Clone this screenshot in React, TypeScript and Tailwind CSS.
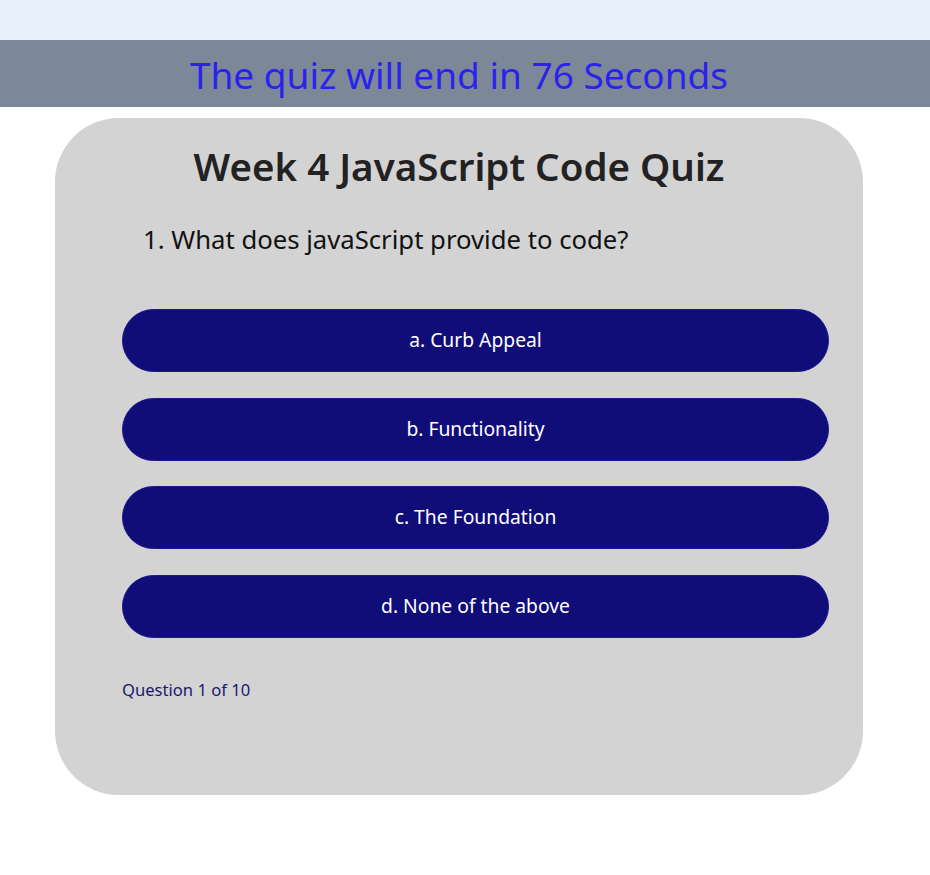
const choices = ['a. Curb Appeal', 'b. Functionality', 'c. The Foundation', 'd. None of the above'];

export default function App() {
  return (
    <div className="min-h-[875px] bg-white font-['Segoe_UI','Noto_Sans',sans-serif]">
      <div className="h-[40px] bg-[#e8f1fb]" />
      <header className="h-[67px] bg-[#7c8797] flex items-center justify-center pr-[12px] pt-[2px]">
        <h2 className="text-[37px] leading-none text-[#2b22ee]">The quiz will end in 76 Seconds</h2>
      </header>

      <div className="pl-[55px] pt-[11px]">
        <main className="w-[808px] rounded-[64px] bg-[#d3d3d3] pt-[25px] pb-[93px]">
          <h1 className="text-center text-[38.5px] leading-[46px] font-semibold text-[#222222]">
            Week 4 JavaScript Code Quiz
          </h1>
          <p className="mt-[33px] pl-[88px] text-[25.7px] leading-[36px] text-[#111111]">
            1. What does javaScript provide to code?
          </p>

          <div className="mt-[51px] ml-[67px] w-[707px] flex flex-col gap-[25.5px]">
            {choices.map(choice => (
              <button
                key={choice}
                className="h-[63px] w-full rounded-full bg-[#100c78] border border-[#1c1890] text-white text-[19.3px]"
              >
                {choice}
              </button>
            ))}
          </div>

          <p className="mt-[40px] pl-[67px] text-[16.6px] leading-[24px] text-[#1a1870]">Question 1 of 10</p>
        </main>
      </div>
    </div>
  );
}
